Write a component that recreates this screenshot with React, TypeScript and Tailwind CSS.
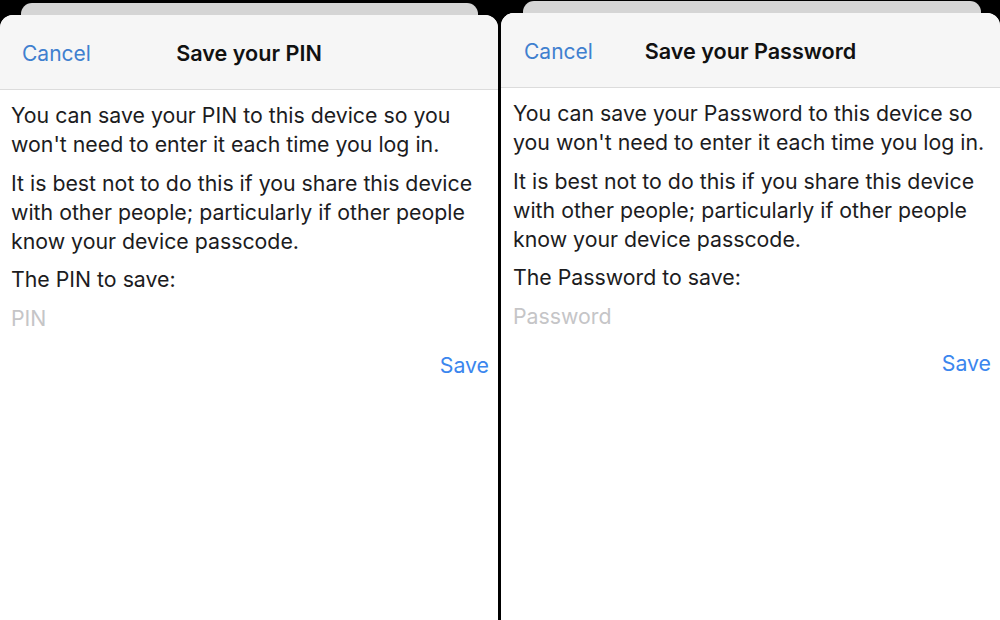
import type { ReactNode } from "react";

interface SheetProps {
  kind:   string;   // "PIN" | "Password"
  topPad: string;   // tailwind class, shifts the whole sheet stack
  backX:  string;   // margin of the card peeking out behind
  padL:   string;
  cancelL: string;
}

const FONT = { fontFamily: "Inter, 'Noto Sans', 'Liberation Sans', sans-serif" };

function Para({ children }: { children: ReactNode }) {
  return <p className="text-[21.3px] leading-[29.3px] text-[#1c1c1e]">{children}</p>;
}

function Sheet({ kind, topPad, backX, padL, cancelL }: SheetProps) {
  return (
    <div className={`flex h-full flex-col bg-black ${topPad}`}>
      {/* card behind the sheet */}
      <div className={`h-[12px] shrink-0 rounded-t-[11px] bg-[#d5d5d5] ${backX}`} />

      <div className="flex flex-1 flex-col overflow-hidden rounded-t-[13px] bg-white">
        <div className="relative flex h-[75px] shrink-0 items-center justify-center border-b border-[#dcdcdc] bg-[#f6f6f6] pt-[3px]">
          <span className={`absolute top-[39px] -translate-y-1/2 text-[21px] text-[#3f80cf] ${cancelL}`}>Cancel</span>
          <span className="text-[21.6px] font-semibold text-[#111]">Save your {kind}</span>
        </div>

        <div className={`flex flex-col gap-[9px] pt-[11px] pr-[8px] ${padL}`}>
          <Para>You can save your {kind} to this device so you won't need to enter it each time you log in.</Para>
          <Para>It is best not to do this if you share this device with other people; particularly if other people know your device passcode.</Para>
          <Para>The {kind} to save:</Para>
          <div className="text-[21.3px] leading-[29.3px] text-[#c5c5c7]">{kind}</div>
        </div>
        <div className="flex justify-end pt-[18px] pr-[9px]">
          <span className="text-[21.3px] leading-[29px] text-[#3b86ee]">Save</span>
        </div>
      </div>
    </div>
  );
}

export default function App() {
  return (
    <div className="flex h-[620px] w-[1000px] overflow-hidden bg-black" style={FONT}>
      <div className="w-[498px] shrink-0">
        <Sheet kind="PIN" topPad="pt-[3px]" backX="ml-[21px] mr-[20px]" padL="pl-[11px]" cancelL="left-[22px]" />
      </div>
      <div className="w-[3px] shrink-0 bg-black" />
      <div className="w-[499px] shrink-0">
        <Sheet kind="Password" topPad="pt-[1px]" backX="ml-[22px] mr-[19px]" padL="pl-[12px]" cancelL="left-[23px]" />
      </div>
    </div>
  );
}
